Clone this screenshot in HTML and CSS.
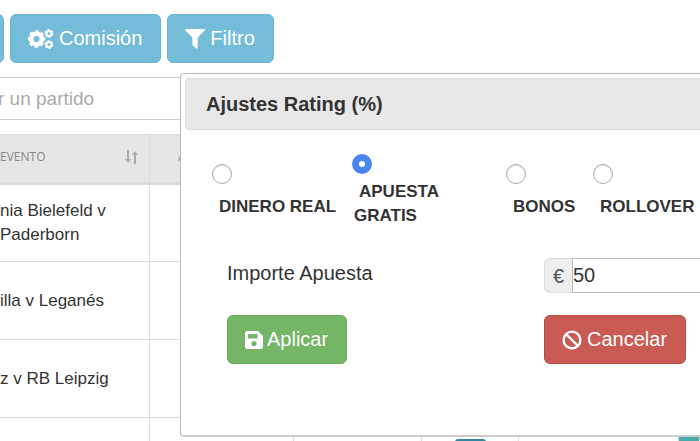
FILE: index.html
```html
<!DOCTYPE html>
<html lang="es">
<head>
  <meta charset="UTF-8">
  <meta name="viewport" content="width=device-width, initial-scale=1">
  <title>Ajustes Rating</title>
  <link rel="stylesheet" href="styles.css">
</head>
<body>

  <div class="page">
    <div class="toolbar">
      <button type="button" class="btn btn-info btn-corto" aria-label="Anterior"></button>
      <button type="button" class="btn btn-info">
        <svg viewBox="0 0 26 20" width="26" height="20" aria-hidden="true">
          <g fill="none" stroke="#fff">
            <circle cx="8.500" cy="10" r="5.200" stroke-width="4.400"/>
            <circle cx="8.500" cy="10" r="7.600" stroke-width="2.400" stroke-dasharray="3.600 2.370" stroke-dashoffset="1.800"/>
            <circle cx="21" cy="4.400" r="2.500" stroke-width="2"/>
            <circle cx="21" cy="4.400" r="3.700" stroke-width="1.500" stroke-dasharray="2.200 1.670"/>
            <circle cx="21" cy="15.600" r="2.500" stroke-width="2"/>
            <circle cx="21" cy="15.600" r="3.700" stroke-width="1.500" stroke-dasharray="2.200 1.670"/>
          </g>
        </svg>
        Comisión
      </button>
      <button type="button" class="btn btn-info">
        <svg viewBox="0 0 20 20" width="20" height="20" aria-hidden="true">
          <path fill="#fff" d="M.6 0h18.800c.6 0 .8.7.4 1.200L12.700 8.500v10.500c0 .8-.7 1.100-1.300.6L8 16.800c-.4-.3-.6-.6-.6-1.100V8.500L.2 1.200C-.2.7 0 0 .6 0z"/>
        </svg>
        Filtro
      </button>
    </div>

    <input type="text" class="buscar" placeholder="r un partido" aria-label="Buscar un partido">

    <table class="partidos">
      <colgroup>
        <col class="col-evento">
        <col class="col-a">
        <col class="col-b">
        <col class="col-c">
        <col class="col-d">
        <col>
      </colgroup>
      <thead>
        <tr>
          <th>
            <div class="cabecera">
              EVENTO
              <svg viewBox="0 0 13 14" width="13" height="14" aria-hidden="true">
                <path fill="none" stroke="#aaa" stroke-width="2" d="M3 0v11M10 14V3"/>
                <path fill="#aaa" d="M0 9h6l-3 4zM7 5h6l-3-4z"/>
              </svg>
            </div>
          </th>
          <th class="centrado">A</th>
          <th></th>
          <th></th>
          <th></th>
          <th></th>
        </tr>
      </thead>
      <tbody>
        <tr>
          <td>nia Bielefeld v<br>Paderborn</td>
          <td></td><td></td><td></td><td></td><td></td>
        </tr>
        <tr>
          <td>illa v Leganés</td>
          <td></td><td></td><td></td><td></td><td></td>
        </tr>
        <tr>
          <td>z v RB Leipzig</td>
          <td></td><td></td><td></td><td></td><td></td>
        </tr>
        <tr class="ultima">
          <td></td><td></td><td></td>
          <td><div class="etiqueta"></div></td>
          <td></td>
          <td class="rating"></td>
        </tr>
      </tbody>
    </table>
  </div>

  <div class="modal" role="dialog" aria-labelledby="titulo">
    <h2 id="titulo" class="modal-titulo">Ajustes Rating (%)</h2>

    <form>
      <div class="opciones">
        <div class="opcion">
          <input type="radio" name="tipo" id="real">
          <label for="real">DINERO REAL</label>
        </div>
        <div class="opcion opcion-doble">
          <input type="radio" name="tipo" id="gratis" checked>
          <label for="gratis">APUESTA<br>GRATIS</label>
        </div>
        <div class="opcion">
          <input type="radio" name="tipo" id="bonos">
          <label for="bonos">BONOS</label>
        </div>
        <div class="opcion">
          <input type="radio" name="tipo" id="rollover">
          <label for="rollover">ROLLOVER</label>
        </div>
      </div>

      <div class="campos">
        <label for="importe">Importe Apuesta</label>
        <div class="grupo">
          <span class="moneda">€</span>
          <input type="text" id="importe" value="50">
        </div>
        <button type="button" class="btn btn-success">
          <svg viewBox="0 0 18 18" width="18" height="18" aria-hidden="true">
            <path fill="#fff" fill-rule="evenodd" d="M2 0h11l5 5v11a2 2 0 0 1-2 2H2a2 2 0 0 1-2-2V4a2 2 0 0 1 0-2a2 2 0 0 1 2-2zM3 3v4.500h9.500V3zM9 10a2.600 2.600 0 1 0 0 5.200a2.600 2.600 0 1 0 0-5.200z"/>
          </svg>
          Aplicar
        </button>
        <button type="button" class="btn btn-danger">
          <svg viewBox="0 0 20 20" width="20" height="20" aria-hidden="true">
            <g fill="none" stroke="#fff" stroke-width="2.400">
              <circle cx="10" cy="10" r="8.400"/>
              <path d="M4 4l12 12"/>
            </g>
          </svg>
          Cancelar
        </button>
      </div>
    </form>
  </div>

</body>
</html>
```

FILE: styles.css
```css
body {
  margin: 0;
  height: 100vh;
  position: relative;
  overflow: hidden;
  background-color: #fff;
  color: #333;
  font-family: "Liberation Sans", Arial, sans-serif;
  font-size: 17px;
  line-height: 24px;
}

input, button {
  font-family: inherit;
  box-sizing: border-box;
}

/* la tabla continúa por el lado izquierdo */
.page {
  margin-left: -12px;
  padding-top: 14px;
}

.toolbar {
  display: flex;
  gap: 6px;
}

.btn {
  display: flex;
  align-items: center;
  justify-self: start;
  gap: 5px;
  height: 49px;
  padding: 0 18px 0 17px;
  border: 1px solid;
  border-radius: 6px;
  color: #fff;
  font-size: 20px;
  cursor: pointer;
}

.btn-info {
  background-color: #75bcd9;
  border-color: #68b4d3;
}

.btn-corto {
  width: 16px;
  padding: 0;
}

.btn-success {
  background-color: #74b566;
  border-color: #66a959;
  gap: 4px;
}

.btn-danger {
  background-color: #c95b54;
  border-color: #c04a43;
}

.buscar {
  display: block;
  width: 100%;
  height: 43px;
  margin: 14px 0;
  padding: 0 9px;
  border: 1px solid #ccc;
  font-size: 19px;
}

.buscar::placeholder {
  color: #aaa;
}

.partidos {
  width: 100%;
  table-layout: fixed;
  border-collapse: collapse;
}

.col-evento { width: 161px; }
.col-a { width: 144px; }
.col-b { width: 128px; }
.col-c { width: 97px; }
.col-d { width: 160px; }

.partidos th,
.partidos td {
  box-sizing: border-box;
  padding: 0 11px;
  border: 1px solid #ddd;
  text-align: left;
}

.partidos th {
  height: 49px;
  padding-bottom: 4px;
  background-color: #e6e6e6;
  border-bottom: 3px solid #dadada;
  color: #888;
  font-family: "Open Sans", sans-serif;
  font-size: 12px;
  font-weight: normal;
}

.partidos th.centrado {
  padding-left: 28px;
}

.partidos td {
  height: 78px;
}

.cabecera {
  display: flex;
  align-items: center;
  justify-content: space-between;
}

.partidos .ultima td {
  padding-top: 21px;
  vertical-align: top;
}

.etiqueta {
  width: 31px;
  height: 24px;
  margin: 0 auto;
  border-radius: 3px;
  background-color: #31859c;
}

.partidos .rating {
  background-color: #4aa9a9;
}

.modal {
  position: absolute;
  top: 73px;
  left: 180px;
  right: -200px;
  box-sizing: border-box;
  height: 364px;
  padding: 4px;
  border: 1px solid #bbb;
  border-bottom: 2px solid #ccc;
  border-radius: 4px;
  background-color: #fff;
}

.modal-titulo {
  margin: 0;
  padding: 13px 20px;
  border: 1px solid #ddd;
  border-radius: 4px;
  background-color: #e8e8e8;
  font-size: 20px;
  line-height: 24px;
}

.opciones {
  display: grid;
  grid-template-columns: 140px 154px 87px auto;
  align-items: center;
  padding: 24px 27px 0;
  font-weight: bold;
}

.opcion {
  display: flex;
  flex-direction: column;
  gap: 11px;
}

.opcion-doble {
  gap: 6px;
}

.opcion label {
  padding-left: 2px;
  text-indent: 5px;
}

.opcion input {
  appearance: none;
  width: 20px;
  height: 20px;
  margin: 0;
  border: 1px solid #aaa;
  border-radius: 50%;
  background-color: #fff;
  box-shadow: inset 0 1px 1px #ddd;
}

.opcion input:checked {
  border: 7px solid #4a86f0;
  box-shadow: none;
}

.campos {
  display: grid;
  grid-template-columns: 317px 1fr;
  row-gap: 22px;
  padding: 30px 42px 0;
  font-size: 20px;
}

.campos label {
  line-height: 30px;
}

.grupo {
  display: flex;
  height: 35px;
}

.moneda {
  display: flex;
  align-items: center;
  justify-content: center;
  box-sizing: border-box;
  width: 28px;
  border: 1px solid #ddd;
  border-right: none;
  border-radius: 6px 0 0 6px;
  background-color: #eee;
  color: #555;
}

.grupo input {
  flex: 1;
  min-width: 0;
  padding: 0;
  border: 1px solid #bbb;
  color: #333;
  font-size: 20px;
}
```
